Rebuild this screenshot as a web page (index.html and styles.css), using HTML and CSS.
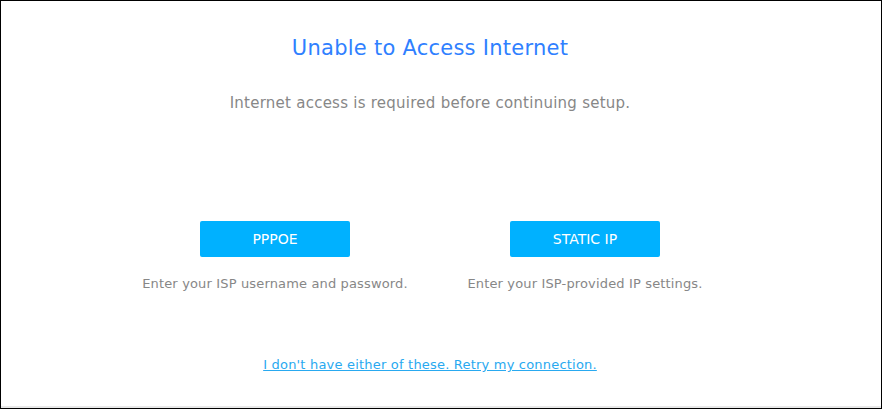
FILE: index.html
```html
<!DOCTYPE html>
<html>
<head>
<meta charset="utf-8">
<link rel="stylesheet" href="styles.css">
</head>
<body>
<div class="frame">
  <div class="content">
    <h1 class="title">Unable to Access Internet</h1>
    <p class="subtitle">Internet access is required before continuing setup.</p>
    <div class="options">
      <div class="option">
        <button class="btn">PPPOE</button>
        <p class="desc">Enter your ISP username and password.</p>
      </div>
      <div class="option">
        <button class="btn">STATIC IP</button>
        <p class="desc">Enter your ISP-provided IP settings.</p>
      </div>
    </div>
    <a class="retry" href="#">I don't have either of these. Retry my connection.</a>
  </div>
  <div class="bottom-line"></div>
</div>
</body>
</html>
```
FILE: styles.css
```css
html, body {
  margin: 0;
  padding: 0;
  background: #fff;
}
body {
  font-family: "DejaVu Sans", sans-serif;
}
.frame {
  width: 880px;
  height: 407px;
  border: 1px solid #000;
  display: flex;
  flex-direction: column;
  background: #fff;
}
.content {
  width: 858px;
  flex: 1;
  display: flex;
  flex-direction: column;
  align-items: center;
}
.title {
  margin: 34px 0 0;
  font-size: 21px;
  letter-spacing: 0.25px;
  line-height: 26px;
  font-weight: normal;
  color: #2f80ff;
}
.subtitle {
  margin: 32px 0 0;
  font-size: 15px;
  letter-spacing: 0.25px;
  line-height: 20px;
  color: #878787;
}
.options {
  display: flex;
  margin-top: 108px;
}
.option {
  width: 310px;
  display: flex;
  flex-direction: column;
  align-items: center;
}
.btn {
  width: 150px;
  height: 36px;
  border: none;
  border-radius: 2px;
  background: #00b1ff;
  color: #fff;
  font-family: inherit;
  font-size: 14px;
  padding: 0;
}
.desc {
  margin: 18px 0 0;
  font-size: 13px;
  letter-spacing: 0.15px;
  line-height: 18px;
  color: #878787;
}
.retry {
  margin-top: 63px;
  font-size: 13px;
  letter-spacing: 0.2px;
  line-height: 18px;
  color: #29a9f0;
  text-decoration: underline;
}
.bottom-line {
  height: 2px;
  background: #e8e8e8;
}
```
